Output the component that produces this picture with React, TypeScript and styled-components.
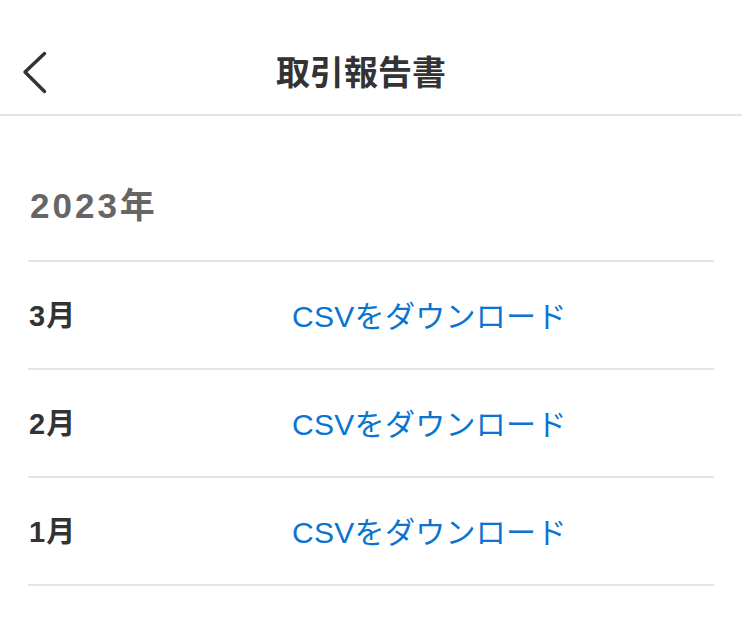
import React from "react";
import styled, { createGlobalStyle } from "styled-components";

const Global = createGlobalStyle`
  html, body { margin: 0; padding: 0; background: #fff; }
  body { font-family: "Noto Sans CJK JP", "Noto Sans", sans-serif; }
`;

const Page = styled.div`
  width: 742px;
  min-height: 636px;
  background: #fff;
`;

const Header = styled.header`
  position: relative;
  height: 116px;
  box-sizing: border-box;
  padding-top: 28px;
  display: flex;
  align-items: center;
  justify-content: center;
  border-bottom: 2px solid #e4e4e4;
`;

const BackButton = styled.button`
  position: absolute;
  left: 18px;
  top: 48px;
  background: none;
  border: 0;
  padding: 0;
  display: flex;
  cursor: pointer;
`;

const Title = styled.h1`
  margin: 0 20px 0 0;
  font-size: 34px;
  line-height: 1;
  font-weight: 700;
  color: #333;
`;

const Content = styled.main`
  padding: 0 28px;
`;

const Year = styled.h2`
  margin: 0;
  height: 146px;
  box-sizing: border-box;
  padding: 28px 0 0 2px;
  display: flex;
  align-items: center;
  font-family: "Liberation Sans", "Noto Sans CJK JP", sans-serif;
  font-size: 35px;
  font-weight: 700;
  letter-spacing: 3px;
  color: #666;
  border-bottom: 2px solid #e4e4e4;
`;

const Row = styled.div`
  height: 106px;
  display: flex;
  align-items: center;
  border-bottom: 2px solid #e4e4e4;
`;

const Month = styled.span`
  width: 263px;
  padding: 0 0 4px 1px;
  font-family: "Liberation Sans", "Noto Sans CJK JP", sans-serif;
  font-size: 29px;
  font-weight: 700;
  letter-spacing: 1px;
  color: #333;
`;

const Download = styled.a`
  padding-bottom: 2px;
  font-family: "Liberation Sans", "Noto Sans CJK JP", sans-serif;
  font-size: 30px;
  letter-spacing: 0.3px;
  color: #0a74d0;
  text-decoration: none;
  cursor: pointer;
`;

const months = ["3月", "2月", "1月"];

export default function App() {
  return (
    <Page>
      <Global />
      <Header>
        <BackButton aria-label="戻る">
          <svg width="32" height="48" viewBox="0 0 32 48" fill="none">
            <path d="M26.5 5.5 L7 24 L26.5 43.5" stroke="#333" strokeWidth="3.4" strokeLinecap="round" strokeLinejoin="round" />
          </svg>
        </BackButton>
        <Title>取引報告書</Title>
      </Header>
      <Content>
        <Year>2023年</Year>
        {months.map((m) => (
          <Row key={m}>
            <Month>{m}</Month>
            <Download>CSVをダウンロード</Download>
          </Row>
        ))}
      </Content>
    </Page>
  );
}
